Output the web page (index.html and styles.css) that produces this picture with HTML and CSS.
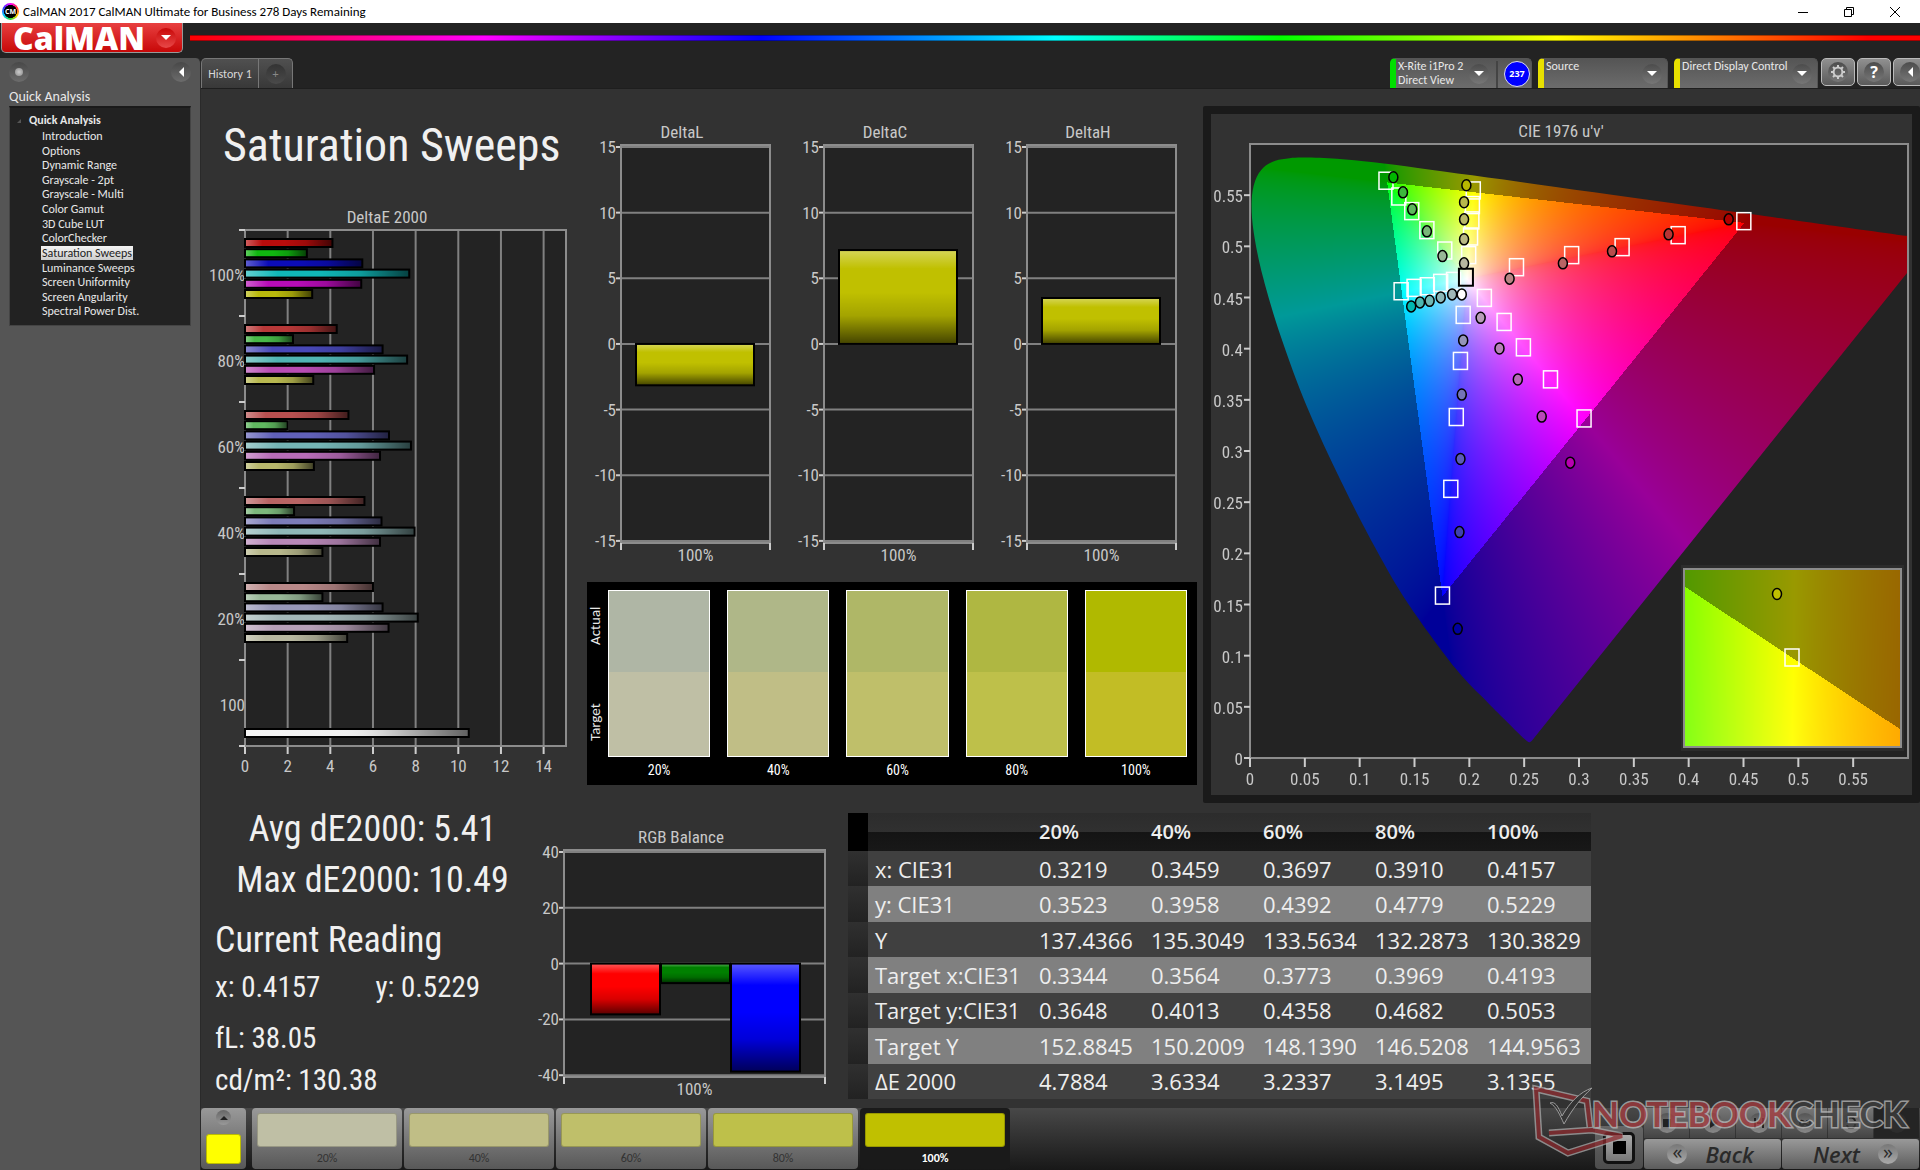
FILE: index.html
```html
<!DOCTYPE html>
<html lang="en">

<head>
    <meta charset="UTF-8">
    <meta name="viewport" content="width=device-width, initial-scale=1.0">
    <title>CalMAN 2017</title>
    <link rel="stylesheet" href="styles.css">
</head>

<body>
    <div class="titlebar">
        <span class="app-icon">CM</span>
        <span class="titlebar-text">CalMAN 2017 CalMAN Ultimate for Business 278 Days Remaining</span>
        <button class="win-btn" aria-label="Minimize"><svg viewBox="0 0 12 12"><path d="M1 6.5h10" /></svg></button>
        <button class="win-btn" aria-label="Restore"><svg viewBox="0 0 12 12"><path d="M1.5 3.5h7v7h-7zM3.5 3.5v-2h7v7h-2" /></svg></button>
        <button class="win-btn" aria-label="Close"><svg viewBox="0 0 12 12"><path d="M1 1l10 10M11 1L1 11" /></svg></button>
    </div>

    <div class="brandbar">
        <button class="brand"><span class="brand-text">CalMAN</span><span class="brand-arrow"><i class="tri-down"></i></span></button>
        <div class="rainbow"></div>
    </div>

    <div class="app">
        <aside class="sidebar">
            <div class="sidebar-top">
                <button class="round" aria-label="Pin"><i class="dot"></i></button>
                <button class="round" aria-label="Collapse"><i class="tri-left"></i></button>
            </div>
            <div class="sidebar-title">Quick Analysis</div>
            <nav class="tree">
                <div class="tree-root">Quick Analysis</div>
                <ul>
                    <li><a href="#">Introduction</a></li>
                    <li><a href="#">Options</a></li>
                    <li><a href="#">Dynamic Range</a></li>
                    <li><a href="#">Grayscale - 2pt</a></li>
                    <li><a href="#">Grayscale - Multi</a></li>
                    <li><a href="#">Color Gamut</a></li>
                    <li><a href="#">3D Cube LUT</a></li>
                    <li><a href="#">ColorChecker</a></li>
                    <li><a href="#" class="current">Saturation Sweeps</a></li>
                    <li><a href="#">Luminance Sweeps</a></li>
                    <li><a href="#">Screen Uniformity</a></li>
                    <li><a href="#">Screen Angularity</a></li>
                    <li><a href="#">Spectral Power Dist.</a></li>
                </ul>
            </nav>
        </aside>

        <main class="main">
            <div class="tabbar">
                <button class="tab">History 1</button>
                <button class="tab tab-add" aria-label="Add history"><span>+</span></button>
                <div class="devices">
                    <button class="device meter">
                        <span class="device-name">X-Rite i1Pro 2<br>Direct View</span>
                        <span class="drop"><i class="tri-down"></i></span>
                        <span class="count">237</span>
                    </button>
                    <button class="device source">
                        <span class="device-name">Source</span>
                        <span class="drop"><i class="tri-down"></i></span>
                    </button>
                    <button class="device display">
                        <span class="device-name">Direct Display Control</span>
                        <span class="drop"><i class="tri-down"></i></span>
                    </button>
                    <button class="tool" aria-label="Settings"><span class="drop">
                        <svg class="gear" viewBox="0 0 16 16"><circle cx="8" cy="8" r="4.4" /><path d="M8 1v2.4M8 12.600v2.400M1 8h2.400M12.600 8H15M3 3l1.800 1.800M11.200 11.200L13 13M13 3l-1.800 1.800M4.800 11.200L3 13" /></svg>
                    </span></button>
                    <button class="tool" aria-label="Help"><span class="drop">?</span></button>
                    <button class="tool tool-last" aria-label="Collapse"><span class="drop"><i class="tri-left"></i></span></button>
                </div>
            </div>

            <div class="workspace">
                <div class="row-top">
                    <section class="col-delta-e">
                        <h1>Saturation Sweeps</h1>
                        <svg class="chart" id="deltaE" viewBox="0 0 377 590"></svg>
                    </section>

                    <section class="col-middle">
                        <div class="delta-charts">
                            <svg class="chart" id="deltaL" viewBox="0 0 203 450"></svg>
                            <svg class="chart" id="deltaC" viewBox="0 0 203 450"></svg>
                            <svg class="chart" id="deltaH" viewBox="0 0 203 450"></svg>
                        </div>
                        <div class="swatches">
                            <div class="swatch-side"><span>Actual</span><span>Target</span></div>
                            <div class="swatch s20"><div class="pair"></div>20%</div>
                            <div class="swatch s40"><div class="pair"></div>40%</div>
                            <div class="swatch s60"><div class="pair"></div>60%</div>
                            <div class="swatch s80"><div class="pair"></div>80%</div>
                            <div class="swatch s100"><div class="pair"></div>100%</div>
                        </div>
                    </section>

                    <section class="col-cie">
                        <svg class="chart" id="cie" viewBox="0 0 701 681"></svg>
                    </section>
                </div>

                <div class="row-bottom">
                    <section class="readings">
                        <p class="big center">Avg dE2000: 5.41</p>
                        <p class="big center">Max dE2000: 10.49</p>
                        <p class="big gap">Current Reading</p>
                        <p class="xy"><span>x: 0.4157</span><span>y: 0.5229</span></p>
                        <p class="gap">fL: 38.05</p>
                        <p>cd/m²: 130.38</p>
                    </section>

                    <section class="col-rgb">
                        <svg class="chart" id="rgb" viewBox="0 0 304 285"></svg>
                    </section>

                    <table class="results">
                        <thead>
                            <tr><td class="handle"></td><td></td><th>20%</th><th>40%</th><th>60%</th><th>80%</th><th>100%</th></tr>
                        </thead>
                        <tbody>
                            <tr><td class="handle"></td><th>x: CIE31</th><td>0.3219</td><td>0.3459</td><td>0.3697</td><td>0.3910</td><td>0.4157</td></tr>
                            <tr><td class="handle"></td><th>y: CIE31</th><td>0.3523</td><td>0.3958</td><td>0.4392</td><td>0.4779</td><td>0.5229</td></tr>
                            <tr><td class="handle"></td><th>Y</th><td>137.4366</td><td>135.3049</td><td>133.5634</td><td>132.2873</td><td>130.3829</td></tr>
                            <tr><td class="handle"></td><th>Target x:CIE31</th><td>0.3344</td><td>0.3564</td><td>0.3773</td><td>0.3969</td><td>0.4193</td></tr>
                            <tr><td class="handle"></td><th>Target y:CIE31</th><td>0.3648</td><td>0.4013</td><td>0.4358</td><td>0.4682</td><td>0.5053</td></tr>
                            <tr><td class="handle"></td><th>Target Y</th><td>152.8845</td><td>150.2009</td><td>148.1390</td><td>146.5208</td><td>144.9563</td></tr>
                            <tr><td class="handle"></td><th>ΔE 2000</th><td>4.7884</td><td>3.6334</td><td>3.2337</td><td>3.1495</td><td>3.1355</td></tr>
                        </tbody>
                    </table>
                </div>
            </div>

            <footer class="footer">
                <button class="current-patch" aria-label="Current patch"><span class="up"><i class="tri-up"></i></span><span class="patch-color"></span></button>
                <button class="patch p20"><span></span>20%</button>
                <button class="patch p40"><span></span>40%</button>
                <button class="patch p60"><span></span>60%</button>
                <button class="patch p80"><span></span>80%</button>
                <button class="patch p100 selected"><span></span>100%</button>

                <div class="transport">
                    <button class="stop" aria-label="Stop pattern"><i></i></button>
                    <div class="transport-grid">
                        <button class="key" aria-label="Stop"><span><svg viewBox="0 0 12 12"><path d="M2 2h8v8H2z" /></svg></span></button>
                        <button class="key" aria-label="Play"><span><svg viewBox="0 0 12 12"><path d="M3 1l8 5-8 5z" /></svg></span></button>
                        <button class="key" aria-label="Step"><span><svg viewBox="0 0 12 12"><path d="M1 1h2v10H1zM9 1h2v10H9zM4 5h4v2H4z" /></svg></span></button>
                        <button class="key" aria-label="Continuous"><span><svg viewBox="0 0 12 12"><path class="line" d="M6 6C4 3 1 3 1 6s3 3 5 0 5-3 5 0-3 3-5 0z" /></svg></span></button>
                        <button class="key" aria-label="Refresh"><span><svg viewBox="0 0 12 12"><path class="line" d="M2 5a4 4 0 0 1 8-1M10 7a4 4 0 0 1-8 1" /></svg></span></button>
                        <button class="key off" aria-label="Record"><span></span></button>
                        <button class="nav"><span>«</span>Back</button>
                        <button class="nav next">Next<span>»</span></button>
                    </div>
                </div>

                <svg class="watermark" viewBox="0 0 400 80">
                    <path class="halo" d="M72 49L70 47 67 21 16 9l3 48 29 16 54-17-30-6-43 3" />
                    <path class="box" d="M70 47L67 21 16 9l3 48 29 16 54-17-30-6-43 3" />
                    <path class="tick" d="M30 23c5-2 8 3 12 13C50 22 60 12 72 8 61 18 53 28 44 44 40 35 36 26 30 23z" />
                    <text x="72" y="47"><tspan class="red">NOTEBOOK</tspan><tspan class="gray">CHECK</tspan></text>
                </svg>
            </footer>
        </main>
    </div>
    <script src="charts.js"></script>
</body>

</html>
```
FILE: styles.css
```css
* {
    box-sizing: border-box;
}

body {
    margin: 0;
    min-height: 100vh;
    display: flex;
    flex-direction: column;
    background: #232323;
    color: #e8e8e8;
    font: 12px/14px Carlito, Lato, sans-serif;
}

button {
    border: 0;
    padding: 0;
    background: none;
    color: inherit;
    font: inherit;
}

a {
    color: inherit;
    text-decoration: none;
}

/* small arrows */
.tri-down {
    border: 5px solid transparent;
    border-top-color: #fff;
    border-bottom: 0;
}

.tri-left {
    border: 5px solid transparent;
    border-right-color: #fff;
    border-left: 0;
}

.tri-up {
    border: 4px solid transparent;
    border-bottom-color: #222;
    border-top: 0;
}

/* window title */
.titlebar {
    display: flex;
    align-items: center;
    height: 23px;
    padding: 0 2px;
    background: #fff;
    color: #000;
    font-size: 13px;
    line-height: 23px;
}

.app-icon {
    width: 17px;
    height: 17px;
    margin-right: 4px;
    border-radius: 50%;
    background: radial-gradient(#000 52%, transparent 56%), conic-gradient(#f0f, #f33, #fc0, #3d3, #0cf, #33f, #f0f);
    color: #fff;
    font: bold 7px/17px "Open Sans", sans-serif;
    text-align: center;
}

.titlebar-text {
    flex: 1;
}

.win-btn {
    display: grid;
    place-items: center;
    width: 46px;
    height: 23px;
}

.win-btn svg {
    width: 12px;
    height: 12px;
    fill: none;
    stroke: #000;
}

.brandbar {
    display: flex;
    align-items: flex-start;
    gap: 7px;
    height: 35px;
    padding-left: 1px;
}

.brand {
    display: flex;
    align-items: center;
    justify-content: space-between;
    width: 182px;
    height: 30px;
    padding: 0 6px 0 11px;
    border: 1px solid #999;
    border-top: 0;
    border-radius: 0 0 5px 5px;
    background: linear-gradient(#e84040, #c80808);
}

.brand-text {
    color: #fff;
    font: 800 32px/28px "Open Sans", sans-serif;
}

.brand-arrow {
    display: grid;
    place-items: center;
    width: 20px;
    height: 20px;
    border-radius: 50%;
    background: linear-gradient(#c80808, #e84848);
}

.rainbow {
    flex: 1;
    height: 6px;
    margin-top: 12px;
    border: 1px solid rgba(0, 0, 0, 0.35);
    border-width: 1px 0;
    background: linear-gradient(90deg, #f00, #f0f 17%, #00f 33%, #0ff 50%, #0f0 63%, #ff0 79%, #f00 97%);
}

.app {
    flex: 1;
    display: flex;
}

/* sidebar */
.sidebar {
    width: 201px;
    padding: 4px 9px 0;
    border-right: 1px solid #2a2a2a;
    border-top-right-radius: 5px;
    background: #555;
}

.sidebar-top {
    display: flex;
    justify-content: space-between;
    height: 26px;
}

.round {
    display: grid;
    place-items: center;
    width: 20px;
    height: 20px;
    border-radius: 50%;
    background: linear-gradient(#484848, #6c6c6c);
}

.dot {
    width: 8px;
    height: 8px;
    border-radius: 50%;
    background: radial-gradient(#ccc, #888);
}

.sidebar-title {
    font-size: 14px;
    line-height: 18px;
}

.tree {
    height: 220px;
    padding: 4px 0 6px 19px;
    border: 1px solid #444;
    border-top: 2px solid #1a1a1a;
    background: #222;
}

.tree-root {
    position: relative;
    font-weight: bold;
    line-height: 17px;
}

.tree-root::before {
    content: "";
    position: absolute;
    left: -12px;
    top: 7px;
    border: 2px solid #444;
    border-color: transparent #555 #555 transparent;
}

.tree ul {
    display: grid;
    grid-auto-rows: 1fr;
    height: 190px;
    margin: 0;
    padding: 0 0 0 12px;
    list-style: none;
}

.tree a {
    display: inline-block;
    padding: 0 1px;
}

.tree .current {
    background: linear-gradient(#f4f4f4, #ccc);
    color: #222;
}

.main {
    flex: 1;
    display: flex;
    flex-direction: column;
    min-width: 0;
}

/* tabs and device bar */
.tabbar {
    display: flex;
    height: 30px;
}

.tab {
    width: 58px;
    border: 1px solid #777;
    border-bottom: 0;
    border-radius: 5px 0 0 0;
    background: linear-gradient(#505050, #383838);
    color: #d8d8d8;
    font-size: 12px;
}

.tab-add {
    display: grid;
    place-items: center;
    width: 34px;
    border-left: 0;
    border-radius: 0 5px 0 0;
}

.tab-add span {
    width: 20px;
    height: 20px;
    border-radius: 50%;
    background: linear-gradient(#333, #4a4a4a);
    color: #888;
    line-height: 20px;
}

.devices {
    display: flex;
    align-items: flex-start;
    margin-left: auto;
    overflow: hidden;
}

.device {
    display: flex;
    align-items: center;
    height: 30px;
    padding-right: 5px;
    margin-right: 6px;
    border: 1px solid #555;
    border-left: 6px solid #e8e000;
    border-bottom: 0;
    border-radius: 5px 5px 0 0;
    background: linear-gradient(#555, #6c6c6c);
    text-align: left;
}

.device-name {
    flex: 1;
    align-self: flex-start;
    padding-left: 2px;
}

.meter {
    width: 142px;
    padding-right: 1px;
    border-left-color: #00e000;
    background: linear-gradient(#444, #444) 100px 2px / 2px 100% no-repeat, linear-gradient(#555, #6c6c6c);
}

.source {
    width: 130px;
}

.display {
    width: 144px;
    margin-right: 3px;
}

.drop {
    display: grid;
    place-items: center;
    width: 20px;
    height: 20px;
    border-radius: 50%;
    background: linear-gradient(#4c4c4c, #777);
}

.count {
    width: 26px;
    height: 26px;
    margin-left: 15px;
    border: 1px solid #dde;
    border-radius: 50%;
    background: #00f;
    color: #fff;
    font: bold 9px/24px "Open Sans", sans-serif;
    text-align: center;
}

.tool {
    display: grid;
    place-items: center;
    width: 34px;
    height: 28px;
    margin-right: 2px;
    border: 1px solid #bbb;
    border-radius: 5px;
    background: linear-gradient(#909090, #5a5a5a);
    color: #fff;
    font: bold 16px/20px "Open Sans", sans-serif;
}

.tool-last {
    margin-right: -7px;
}

.gear {
    width: 16px;
    height: 16px;
    fill: none;
    stroke: #ccc;
    stroke-width: 2;
}

/* workspace */
.workspace {
    flex: 1;
    border-top: 1px solid #1e1e1e;
    background: #323232;
}

.row-top,
.row-bottom {
    display: grid;
    align-items: start;
}

.row-top {
    grid-template-columns: 377fr 625fr 717fr;
}

.row-bottom {
    grid-template-columns: 329fr 318fr 743fr 329fr;
}

.chart {
    display: block;
    width: 100%;
    min-width: 0;
}

.col-delta-e {
    padding-top: 24px;
}

h1 {
    margin: 0 0 22px;
    padding-left: 22px;
    color: #f0f0f0;
    font: 46px/64px "Roboto Condensed", Carlito, sans-serif;
}

.col-middle {
    padding-top: 31px;
}

.delta-charts {
    display: flex;
    padding-right: 16px;
    margin-bottom: 12px;
}

.delta-charts .chart {
    flex: 1;
}

.swatches {
    display: flex;
    gap: 17px;
    height: 203px;
    margin: 0 6px 0 9px;
    padding: 8px 10px 0 0;
    background: #000;
    font: 14px/27px "Roboto Condensed", Carlito, sans-serif;
}

.swatch-side {
    display: flex;
    flex-direction: row-reverse;
    justify-content: space-between;
    width: 16px;
    height: 167px;
    margin-right: -12px;
    padding: 16px 0;
    writing-mode: vertical-rl;
    transform: rotate(180deg);
    font: 15px/16px Carlito, sans-serif;
}

.swatch {
    flex: 1;
    color: #fff;
    text-align: center;
}

.pair {
    height: 167px;
    border: 1px solid #fff;
}

.s20 .pair {
    background: linear-gradient(#afb6a5 49%, #bfbfa5 49%);
}

.s40 .pair {
    background: linear-gradient(#afb788 49%, #c0be86 49%);
}

.s60 .pair {
    background: linear-gradient(#afb767 49%, #bfbf6a 49%);
}

.s80 .pair {
    background: linear-gradient(#afb742 49%, #bec04a 49%);
}

.s100 .pair {
    background: linear-gradient(#b0b900 49%, #c2bd25 49%);
}

.col-cie {
    margin-top: 17px;
    border: 8px solid #1a1a1a;
    border-radius: 2px;
}

.readings {
    padding: 1px 0 0 14px;
    color: #f0f0f0;
    font: 29px/42px "Roboto Condensed", Carlito, sans-serif;
}

.readings p {
    margin: 0;
}

.readings .big {
    font-size: 36px;
    line-height: 51px;
}

.readings .center {
    text-align: center;
}

.readings .gap {
    margin-top: 9px;
}

.readings .xy {
    display: flex;
    gap: 55px;
}

.col-rgb {
    margin-top: 16px;
    padding-right: 14px;
}

/* results table */
.results {
    width: 100%;
    height: 286px;
    margin-top: 10px;
    border-collapse: collapse;
    table-layout: fixed;
    color: #eee;
    font: 22px/32px "Open Sans", sans-serif;
}

.results td,
.results th {
    padding: 0;
    font-weight: normal;
    text-align: left;
}

.results tr > :nth-child(n + 3) {
    width: 112px;
}

.results tr > :last-child {
    width: auto;
}

.results tr > :nth-child(2) {
    width: 171px;
    padding-left: 7px;
}

.results td:first-child {
    width: 20px;
}

.results thead tr {
    height: 38px;
    background: linear-gradient(#2c2c2c, #303030 50%, #141414 50%, #181818);
}

.results thead th {
    font-size: 20px;
    font-weight: 600;
}

.results thead .handle {
    background: #000;
}

.results tbody tr {
    background: #404040;
}

.results tbody tr:nth-child(even) {
    background: #808080;
}

.results tbody .handle {
    background: linear-gradient(#303030, #222);
}

/* footer */
.footer {
    position: relative;
    display: flex;
    gap: 2px;
    height: 62px;
    background: linear-gradient(#484848, #181818);
}

.current-patch {
    display: flex;
    flex-direction: column;
    align-items: center;
    justify-content: space-between;
    width: 45px;
    height: 61px;
    margin-right: 4px;
    padding: 2px 0 5px;
    border-radius: 4px;
    background: linear-gradient(#999, #585858);
}

.up {
    display: grid;
    place-items: center;
    width: 15px;
    height: 15px;
    border-radius: 50%;
    background: linear-gradient(#666, #999);
}

.patch-color {
    width: 35px;
    height: 30px;
    border: 1px solid #bb0;
    border-radius: 3px;
    background: #ff0;
}

.patch {
    display: flex;
    flex-direction: column;
    width: 150px;
    height: 61px;
    padding: 5px 5px 0;
    border-radius: 4px;
    background: linear-gradient(#999, #585858);
    color: #333;
    line-height: 22px;
    text-align: center;
}

.patch span {
    height: 36px;
    border: 1px solid rgba(0, 0, 0, 0.2);
    border-radius: 3px;
}

.p20 span {
    background: #bfbfa5;
}

.p40 span {
    background: #c0be86;
}

.p60 span {
    background: #bfbf6a;
}

.p80 span {
    background: #bec04a;
}

.p100 span {
    background: #c0c000;
}

.patch.selected {
    background: #1a1a1a;
    color: #fff;
    font-weight: bold;
}

.transport {
    display: flex;
    gap: 1px;
    margin-left: auto;
    margin-right: 1px;
}

.stop {
    align-self: flex-end;
    display: grid;
    place-items: center;
    width: 48px;
    height: 43px;
    margin-bottom: 1px;
    border-radius: 4px;
    background: linear-gradient(#666, #4c4c4c);
}

.stop i {
    width: 32px;
    height: 32px;
    border: 3px solid #111;
    border-radius: 5px;
    background: linear-gradient(#000, #000) center / 13px 13px no-repeat, linear-gradient(#aaa, #777);
}

.transport-grid {
    display: grid;
    grid-template-columns: repeat(6, 45px);
    grid-template-rows: 30px 30px;
    gap: 1px;
}

.key {
    display: grid;
    place-items: center;
    background: linear-gradient(#777, #444);
}

.key span {
    display: grid;
    place-items: center;
    width: 20px;
    height: 20px;
    border-radius: 50%;
    background: linear-gradient(#555, #888);
}

.key svg {
    width: 12px;
    height: 12px;
    fill: #222;
}

.key .line {
    fill: none;
    stroke: #222;
    stroke-width: 2;
}

.key.off {
    background: #242424;
}

.key.off span {
    background: #2c2c2c;
}

.nav {
    display: flex;
    grid-column: span 3;
    align-items: center;
    justify-content: center;
    gap: 18px;
    padding-right: 4px;
    border-radius: 3px;
    background: linear-gradient(#999, #5c5c5c);
    color: #2a2a2a;
    font: italic 600 22px/30px "Open Sans", sans-serif;
}

.next {
    padding: 0 0 0 10px;
}

.nav span {
    width: 20px;
    height: 20px;
    border-radius: 50%;
    background: linear-gradient(#777, #aaa);
    font: 20px/16px "Open Sans", sans-serif;
}

/* site mark across the corner */
.watermark {
    position: absolute;
    right: 0;
    bottom: 10px;
    width: 400px;
    height: 80px;
    pointer-events: none;
    opacity: 0.75;
    font: bold 35px Lato, sans-serif;
}

.watermark text {
    stroke: #bbb;
    stroke-width: 3;
    paint-order: stroke;
}

.halo {
    fill: none;
    stroke: #aaa;
    stroke-width: 7;
}

.box {
    fill: none;
    stroke: #8c2a2e;
    stroke-width: 4;
}

.tick {
    fill: #333;
    stroke: #bbb;
}

.red {
    fill: #a83c40;
}

.gray {
    fill: #3c3c3c;
}

/* chart parts */
.plot {
    fill: #232323;
}

.frame {
    fill: none;
    stroke: #8c8c8c;
    stroke-width: 2;
}

.grid {
    stroke: #808080;
    stroke-width: 2;
}

.axis-tick {
    stroke: #ccc;
    stroke-width: 2;
}

.label,
.title {
    fill: #c8c8c8;
    font: 17px "Roboto Condensed", Carlito, sans-serif;
}

.mid {
    text-anchor: middle;
}

.end {
    text-anchor: end;
}

.bar {
    stroke: #000;
    stroke-width: 2;
}

.target {
    fill: none;
    stroke: #fff;
    stroke-width: 1.5;
}

.white-point {
    stroke: #000;
    stroke-width: 2;
}

.measured {
    stroke: #000;
    stroke-width: 1.5;
}

.inset-edge {
    fill: #2c2c2c;
}
```
FILE: charts.js
```javascript
const NS = 'http://www.w3.org/2000/svg'

function add(parent, name, attrs, text) {
    let el = document.createElementNS(NS, name)
    for (let key in attrs) el.setAttribute(key, attrs[key])
    if (text !== undefined) el.textContent = text
    parent.appendChild(el)
    return el
}

function line(svg, x1, y1, x2, y2, cls) {
    add(svg, 'line', { x1, y1, x2, y2, class: cls })
}

function shade(svg, id, vertical, stops) {
    let g = add(svg, 'linearGradient', { id, x1: 0, y1: 0, x2: vertical ? 0 : 1, y2: vertical ? 1 : 0 })
    stops.forEach(([offset, color, opacity]) => add(g, 'stop', { offset, 'stop-color': color, 'stop-opacity': opacity }))
}

const gloss = [[0, '#fff', 0.35], [0.2, '#fff', 0], [0.45, '#000', 0], [0.7, '#000', 0.15], [1, '#000', 0.65]]

function bar(svg, x, y, width, height, fill, glossId) {
    add(svg, 'rect', { x, y, width, height, fill })
    add(svg, 'rect', { x, y, width, height, fill: 'url(#' + glossId + ')', class: 'bar' })
}

// DeltaE 2000, horizontal bars
function drawDeltaE() {
    let svg = document.getElementById('deltaE')
    let left = 44, top = 31, right = 365, bottom = 547, unit = 21.33
    let groups = [
        ['100%', [4.1, 2.9, 5.5, 7.7, 5.45, 3.15], ['#b80c0c', '#10b810', '#0c0cb8', '#10b8b8', '#b80cb8', '#b8b80c']],
        ['80%', [4.3, 2.25, 6.45, 7.6, 6.05, 3.2], ['#b83838', '#48b848', '#4848b8', '#50b4b4', '#b84cb4', '#b8b850']],
        ['60%', [4.85, 2, 6.75, 7.78, 6.33, 3.23], ['#b85050', '#60b860', '#6060b8', '#74b4b4', '#b86cb8', '#b8b86c']],
        ['40%', [5.6, 2.3, 6.4, 7.95, 6.33, 3.63], ['#b86464', '#7cb87c', '#7c7cb8', '#90b8b8', '#b888b8', '#b8b88c']],
        ['20%', [6, 3.63, 6.45, 8.1, 6.73, 4.79], ['#b88888', '#98b898', '#9898b8', '#a4b8b8', '#b8a0b8', '#b8b8a0']],
        ['100', [0, 0, 0, 0, 0, 0], []]
    ]
    shade(svg, 'glossH', false, gloss)
    shade(svg, 'glossW', false, [[0, '#fff', 0.3], [0.4, '#fff', 0], [0.6, '#000', 0.1], [1, '#000', 0.6]])
    add(svg, 'text', { x: 186, y: 24, class: 'title mid' }, 'DeltaE 2000')
    add(svg, 'rect', { x: left, y: top, width: right - left, height: bottom - top, class: 'plot' })
    for (let v = 0; v < 15; v += 2) {
        let x = left + v * unit
        line(svg, x, top, x, bottom, 'grid')
        line(svg, x, bottom, x, bottom + 8, 'axis-tick')
        add(svg, 'text', { x, y: bottom + 26, class: 'label mid' }, v)
    }
    add(svg, 'rect', { x: left, y: top, width: right - left, height: bottom - top, class: 'frame' })
    groups.forEach(([name, values, colors], i) => {
        let y = top + i * 86
        line(svg, left - 6, y, left, y, 'axis-tick')
        add(svg, 'text', { x: left, y: y + 51, class: 'label end' }, name)
        colors.forEach((c, n) => bar(svg, left, y + 9 + n * 10.2, values[n] * unit, 8, c, 'glossH'))
    })
    line(svg, left - 6, bottom, left, bottom, 'axis-tick')
    bar(svg, left, 530, 10.49 * unit, 8, '#f0f0f0', 'glossW')
}

// vertical charts: DeltaL, DeltaC, DeltaH and RGB balance
function drawColumns(id, title, o) {
    let svg = document.getElementById(id)
    let zero = o.top + 2 + o.max * o.unit
    shade(svg, id + 'Gloss', true, gloss)
    add(svg, 'text', { x: o.titleX, y: o.top - 7, class: 'title mid' }, title)
    add(svg, 'rect', { x: o.left, y: o.top, width: o.width, height: o.height, class: 'plot' })
    for (let v = o.max; v >= -o.max; v -= o.step) {
        let y = zero - v * o.unit
        line(svg, o.left, y, o.left + o.width, y, 'grid')
        line(svg, o.left - 5, y, o.left, y, 'axis-tick')
        add(svg, 'text', { x: o.left - 5, y: y + 6, class: 'label end' }, v)
    }
    add(svg, 'rect', { x: o.left, y: o.top, width: o.width, height: o.height, class: 'frame' })
    for (let x of [o.left, o.left + o.width]) line(svg, x, o.top + o.height, x, o.top + o.height + 7, 'axis-tick')
    o.bars.forEach(([x, width, value, color]) => {
        let h = Math.abs(value) * o.unit
        bar(svg, o.left + x, value > 0 ? zero - h : zero, width, h, color, id + 'Gloss')
    })
    add(svg, 'text', { x: o.left + o.width / 2, y: o.top + o.height + 18, class: 'label mid' }, '100%')
}

// CIE 1976 u'v'
const locusXY = [
    [.1741, .0050], [.1714, .0051], [.1644, .0109], [.1566, .0177], [.1440, .0297], [.1241, .0578], [.1096, .0868],
    [.0913, .1327], [.0687, .2007], [.0454, .2950], [.0235, .4127], [.0082, .5384], [.0039, .6548], [.0139, .7502],
    [.0389, .8120], [.0743, .8338], [.1142, .8262], [.1547, .8059], [.2296, .7543], [.3016, .6923], [.3731, .6245],
    [.4441, .5547], [.5125, .4866], [.5752, .4242], [.6270, .3725], [.6658, .3340], [.6915, .3083], [.7347, .2653]
]

// color for a u'v' point, dimmed outside of Rec.709
function uvColor(u, v) {
    let x = 9 * u / (6 * u - 16 * v + 12)
    let y = 4 * v / (6 * u - 16 * v + 12)
    let X = x / y, Z = (1 - x - y) / y
    let rgb = [
        3.2406 * X - 1.5372 - 0.4986 * Z,
        -0.9689 * X + 1.8758 + 0.0415 * Z,
        0.0557 * X - 0.2040 + 1.0570 * Z
    ]
    let max = Math.max(...rgb)
    let min = Math.min(...rgb)
    let dim = min < 0 ? 0.6 : 1
    // white part stays linear, the hue is lifted
    let white = Math.max(min, 0) / max
    return rgb.map(c => {
        let hue = (Math.max(c, 0) / max - white) / (1 - white)
        return 255 * dim * (white + (1 - white) * Math.pow(Math.max(hue, 0), 0.65))
    })
}

function fillGamut(svg, box, range, outline) {
    let holder = add(svg, 'foreignObject', box)
    let canvas = document.createElement('canvas')
    canvas.width = box.width
    canvas.height = box.height
    canvas.style.display = 'block'
    holder.appendChild(canvas)
    let ctx = canvas.getContext('2d')
    let image = ctx.createImageData(canvas.width, canvas.height)
    for (let py = 0; py < canvas.height; py++) {
        for (let px = 0; px < canvas.width; px++) {
            let u = range.u0 + (px + 0.5) / canvas.width * (range.u1 - range.u0)
            let v = range.v1 - (py + 0.5) / canvas.height * (range.v1 - range.v0)
            image.data.set([...uvColor(u, v), 255], (py * canvas.width + px) * 4)
        }
    }
    ctx.putImageData(image, 0, 0)
    if (!outline) return
    ctx.globalCompositeOperation = 'destination-in'
    ctx.beginPath()
    let n = outline.length
    outline.forEach(([x, y], i) => {
        if (i === 0) return ctx.moveTo(x, y)
        let a = outline[Math.max(i - 2, 0)], b = outline[i - 1], c = outline[i], d = outline[Math.min(i + 1, n - 1)]
        ctx.bezierCurveTo(b[0] + (c[0] - a[0]) / 6, b[1] + (c[1] - a[1]) / 6, c[0] - (d[0] - b[0]) / 6, c[1] - (d[1] - b[1]) / 6, c[0], c[1])
    })
    ctx.fill()
}

function drawCie() {
    let svg = document.getElementById('cie')
    let left = 39, top = 30, width = 658, height = 614
    let sx = width / 0.6, sy = height / 0.6
    let px = u => left + u * sx
    let py = v => top + height - v * sy
    let targets = [
        [.124, .5646], [.1357, .5492], [.1475, .5349], [.1613, .5163], [.1776, .4964],
        [.2036, .5551], [.2028, .5408], [.2023, .5258], [.2011, .5101], [.1994, .4919],
        [.243, .4801], [.2933, .4919], [.3393, .4997], [.3904, .5114], [.4503, .5251],
        [.1378, .4566], [.1496, .4599], [.1617, .4615], [.1739, .4648], [.1856, .4667],
        [.2137, .4501], [.2317, .4266], [.2493, .4018], [.274, .3705], [.3046, .3323],
        [.1944, .4335], [.1919, .3885], [.1881, .3337], [.1831, .2635], [.1755, .1592]
    ]
    let measured = [
        [.1307, .5675, '#00b800'], [.1395, .5528, '#3cb83c'], [.1479, .5362, '#5cb85c'], [.1613, .5147, '#78b878'], [.1755, .4905, '#98b898'],
        [.1973, .5597, '#b8b800'], [.1952, .5431, '#b8b84c'], [.1952, .5264, '#b8b868'], [.1952, .5069, '#b8b884'], [.1952, .4834, '#b8b8a0'],
        [.2367, .4684, '#b88484'], [.2853, .4834, '#b86464'], [.3301, .4951, '#b84c4c'], [.3817, .5117, '#b83434'], [.4365, .5264, '#b00000'],
        [.147, .4413, '#00b8b0'], [.155, .4452, '#4cb8b0'], [.1638, .4468, '#70b8b4'], [.1739, .4501, '#8cb8b8'], [.1843, .453, '#a0b8b8'],
        [.2103, .4302, '#b89cb8'], [.2275, .4002, '#b880b8'], [.2442, .3699, '#b868b8'], [.266, .3337, '#b848b8'], [.292, .2886, '#b800b0'],
        [.1944, .408, '#9494b8'], [.1931, .3552, '#7474b8'], [.1919, .2922, '#5c5cb8'], [.191, .2208, '#4040b0'], [.1894, .1262, '#0000a0'],
        [.1931, .453, '#fff']
    ]
    add(svg, 'text', { x: 350, y: 23, class: 'title mid' }, "CIE 1976 u'v'")
    add(svg, 'rect', { x: left, y: top, width, height, class: 'plot' })
    let outline = locusXY.map(([x, y]) => {
        let d = -2 * x + 12 * y + 3
        return [4 * x / d * sx, height - 9 * y / d * sy]
    })
    fillGamut(svg, { x: left, y: top, width, height }, { u0: 0, u1: 0.6, v0: 0, v1: 0.6 }, outline)
    add(svg, 'rect', { x: left, y: top, width, height, class: 'frame' })
    for (let i = 0; i < 12; i++) {
        let value = i * 5 / 100
        line(svg, px(value), top + height, px(value), top + height + 9, 'axis-tick')
        line(svg, left - 6, py(value), left, py(value), 'axis-tick')
        add(svg, 'text', { x: px(value), y: 671, class: 'label mid' }, value)
        add(svg, 'text', { x: left - 7, y: py(value) + 7, class: 'label end' }, value)
    }
    targets.forEach(([u, v]) => add(svg, 'rect', { x: px(u) - 7, y: py(v) - 8, width: 14, height: 17, class: 'target' }))
    add(svg, 'rect', { x: px(.1969) - 7, y: py(.4703) - 8, width: 14, height: 17, class: 'target white-point' })
    measured.forEach(([u, v, fill]) => add(svg, 'ellipse', { cx: px(u), cy: py(v), rx: 4.5, ry: 5.5, fill, class: 'measured' }))

    // zoomed inset around the current patch
    let inset = { x: 473, y: 455, width: 217, height: 178 }
    add(svg, 'rect', { x: 470, y: 451, width: 223, height: 186, class: 'inset-edge' })
    fillGamut(svg, inset, { u0: .160, u1: .247, v0: .5464, v1: .5595 })
    add(svg, 'rect', { ...inset, class: 'frame' })
    add(svg, 'ellipse', { cx: 566, cy: 480, rx: 4.5, ry: 5.5, fill: '#c0c000', class: 'measured' })
    add(svg, 'rect', { x: 574, y: 535, width: 14, height: 17, class: 'target' })
}

drawDeltaE()

let delta = { left: 43, top: 25, width: 149, height: 398, max: 15, step: 5, unit: 13.13, titleX: 104 }
drawColumns('deltaL', 'DeltaL', { ...delta, bars: [[15, 118, -3.15, '#c0c000']] })
drawColumns('deltaC', 'DeltaC', { ...delta, bars: [[15, 118, 7.15, '#c0c000']] })
drawColumns('deltaH', 'DeltaH', { ...delta, bars: [[15, 118, 3.5, '#c0c000']] })
drawColumns('rgb', 'RGB Balance', {
    left: 34, top: 31, width: 261, height: 227, max: 40, step: 20, unit: 2.79, titleX: 151,
    bars: [[27, 69, -18.2, '#ff0000'], [97, 69, -7, '#008000'], [167, 69, -38.7, '#0000ff']]
})

drawCie()
```
